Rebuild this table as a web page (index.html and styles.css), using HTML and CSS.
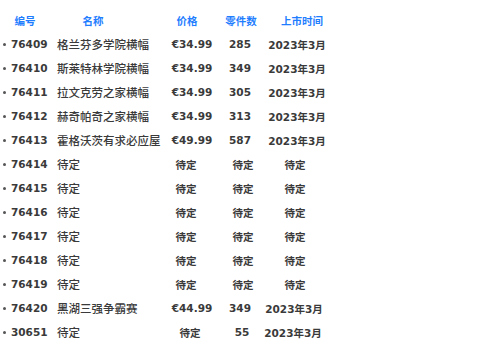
FILE: index.html
```html
<!DOCTYPE html>
<html lang="zh">
<head>
<meta charset="utf-8">
<title>套装列表</title>
<link rel="stylesheet" href="styles.css">
</head>
<body>
<div class="head">
  <span class="h-id">编号</span>
  <span class="h-name">名称</span>
  <span class="h-price">价格</span>
  <span class="h-parts">零件数</span>
  <span class="h-date">上市时间</span>
</div>
<ul class="list">
  <li class="row a"><span class="id">76409</span><span class="name">格兰芬多学院横幅</span><span class="price">€34.99</span><span class="parts">285</span><span class="date">2023年3月</span></li>
  <li class="row a"><span class="id">76410</span><span class="name">斯莱特林学院横幅</span><span class="price">€34.99</span><span class="parts">349</span><span class="date">2023年3月</span></li>
  <li class="row a"><span class="id">76411</span><span class="name">拉文克劳之家横幅</span><span class="price">€34.99</span><span class="parts">305</span><span class="date">2023年3月</span></li>
  <li class="row a"><span class="id">76412</span><span class="name">赫奇帕奇之家横幅</span><span class="price">€34.99</span><span class="parts">313</span><span class="date">2023年3月</span></li>
  <li class="row a"><span class="id">76413</span><span class="name">霍格沃茨有求必应屋</span><span class="price">€49.99</span><span class="parts">587</span><span class="date">2023年3月</span></li>
  <li class="row b"><span class="id">76414</span><span class="name">待定</span><span class="price">待定</span><span class="parts">待定</span><span class="date">待定</span></li>
  <li class="row b"><span class="id">76415</span><span class="name">待定</span><span class="price">待定</span><span class="parts">待定</span><span class="date">待定</span></li>
  <li class="row b"><span class="id">76416</span><span class="name">待定</span><span class="price">待定</span><span class="parts">待定</span><span class="date">待定</span></li>
  <li class="row b"><span class="id">76417</span><span class="name">待定</span><span class="price">待定</span><span class="parts">待定</span><span class="date">待定</span></li>
  <li class="row b"><span class="id">76418</span><span class="name">待定</span><span class="price">待定</span><span class="parts">待定</span><span class="date">待定</span></li>
  <li class="row b"><span class="id">76419</span><span class="name">待定</span><span class="price">待定</span><span class="parts">待定</span><span class="date">待定</span></li>
  <li class="row c"><span class="id">76420</span><span class="name">黑湖三强争霸赛</span><span class="price">€44.99</span><span class="parts">349</span><span class="date">2023年3月</span></li>
  <li class="row d"><span class="id">30651</span><span class="name">待定</span><span class="price">待定</span><span class="parts">55</span><span class="date">2023年3月</span></li>
</ul>
</body>
</html>
```
FILE: styles.css
```css
html, body {
  margin: 0;
  padding: 0;
  background: #ffffff;
}
body {
  padding-top: 8px;
  font-family: "DejaVu Sans", "Noto Sans CJK SC", sans-serif;
  font-size: 10.5px;
  font-weight: bold;
  color: #3a3a3a;
}
.head {
  display: flex;
  height: 24px;
  align-items: center;
  color: #1f7eff;
}
.head span {
  display: flex;
  justify-content: center;
  white-space: nowrap;
}
.h-id { width: 50px; }
.h-name { width: 86px; }
.h-price { width: 102px; }
.h-parts { width: 6px; }
.h-date { width: 116px; }

.list {
  list-style: none;
  margin: 0;
  padding: 0;
}
.row {
  display: flex;
  align-items: center;
  height: 24px;
  white-space: nowrap;
}
.row::before {
  content: "";
  width: 3px;
  height: 3px;
  border-radius: 50%;
  background: #555;
  margin-left: 3px;
  margin-right: 5px;
  flex: none;
}
.row span {
  display: flex;
  flex: none;
}
.id { width: 46px; }
.name { font-family: "Noto Sans CJK SC", sans-serif; font-weight: 500; font-size: 11.5px; }
.price, .parts, .date { justify-content: center; }

.a .name { width: 113px; }
.a .price { width: 44px; }
.a .parts { width: 52px; }
.a .date { width: 62px; }

.b .name { width: 109px; }
.b .price { width: 40px; }
.b .parts { width: 74px; }
.b .date { width: 30px; }

.c .name { width: 113px; }
.c .price { width: 44px; }
.c .parts { width: 52px; }
.c .date { width: 56px; }

.d .name { width: 113px; }
.d .price { width: 40px; }
.d .parts { width: 64px; }
.d .date { width: 38px; }
```
